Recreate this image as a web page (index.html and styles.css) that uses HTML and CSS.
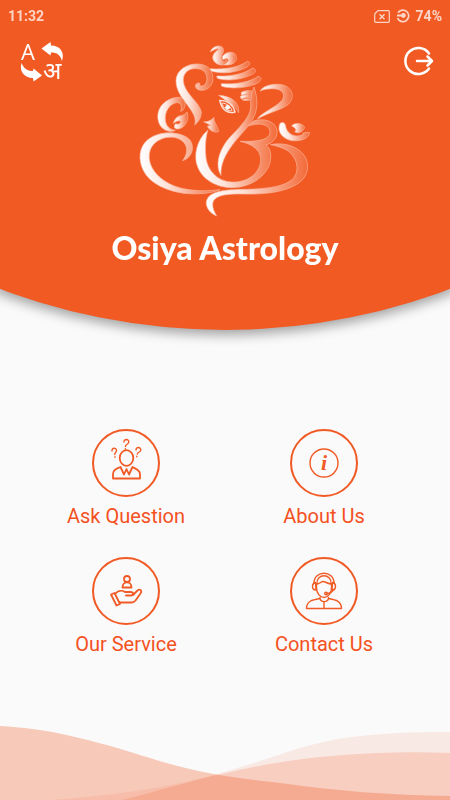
FILE: index.html
```html
<!DOCTYPE html>
<html lang="en">
<head>
    <meta charset="UTF-8">
    <meta name="viewport" content="width=device-width, initial-scale=1.0">
    <title>Osiya Astrology</title>
    <link rel="stylesheet" href="styles.css">
</head>
<body>
    <header class="hero">
        <div class="status-bar">
            <span>11:32</span>
            <div class="status-right">
                <svg width="16" height="13" viewBox="0 0 16 13" fill="none" stroke="currentColor">
                    <path d="M4 .7H14.3Q15.3.7 15.3 1.7V11.3Q15.3 12.3 14.3 12.3H1.7Q.7 12.3.7 11.3V4Z" stroke-width="1.2"/>
                    <path d="M5.5 4.2l5 5M10.5 4.2l-5 5" stroke-width="1.4"/>
                </svg>
                <svg width="14" height="14" viewBox="0 0 14 14" fill="none" stroke="currentColor">
                    <path d="M2 3.800A5.800 5.800 0 1 1 1.500 9" stroke-width="1.7"/>
                    <path d="M1 6.500H7" stroke-width="2"/>
                    <circle cx="7.4" cy="6.5" r="2.400" fill="currentColor" stroke="none"/>
                </svg>
                <span>74%</span>
            </div>
        </div>

        <div class="hero-row">
            <button class="icon-button" aria-label="Change language">
                <svg width="50" height="48" viewBox="-5 0 50 48" fill="#fff">
                    <text x="0" y="20" class="lang-latin">A</text>
                    <text x="22" y="39" class="lang-hindi">अ</text>
                    <path d="M20.5 8.5 29.500 2 30 5.500C39 5.500 44 12 41 21C39.500 15 36 12.500 30 12.500L29.500 15.500Z"/>
                    <path d="M21 35.500 12.500 41.500 12 38C3 38 -2 31 .5 23C3 28.500 6 31 12 31L12.500 28.500Z"/>
                </svg>
            </button>

            <!-- Ganesha logo -->
            <svg class="logo" viewBox="0 0 570 570" role="img" aria-label="Ganesha">
                <defs>
                    <linearGradient id="fade" x1="0" y1="0" x2="1" y2="0">
                        <stop offset="0" stop-color="#fff"/>
                        <stop offset=".35" stop-color="#fde3da"/>
                        <stop offset="1" stop-color="#f36a38"/>
                    </linearGradient>
                </defs>
                <g fill="url(#fade)" stroke="#fab59c" stroke-width="2" stroke-linejoin="round">
                    <path d="M241 47C247 28 276 24 280 39C284 53 266 60 277 73C282 80 288 78 288 70C295 79 293 85 283 87C258 90 240 70 252 53C260 42 268 40 265 38C258 37 251 43 241 47Z"/>
                    <path d="M282 56C292 46 316 45 319 62C322 79 304 90 283 86C292 81 299 73 293 68C288 66 284 69 280 71C275 66 276 60 282 56Z"/>
                    <path d="M240 98C290 102 330 92 352 76C366 80 358 92 340 98C310 112 270 114 243 105Z"/>
                    <path d="M260 120C310 122 345 112 368 96C384 102 376 112 360 118C330 132 290 136 262 127Z"/>
                    <path d="M273 143C320 146 360 138 385 121C400 126 392 138 375 145C340 158 300 158 275 151Z"/>
                    <path d="M194 267C208 225 138 190 138 135C138 100 175 82 205 84C235 86 252 105 248 135C244 160 214 170 200 158C192 149 199 138 210 142C206 149 214 153 222 148C236 138 234 108 212 100C185 92 160 105 160 132C160 170 210 200 214 228C214 248 204 258 194 267Z"/>
                    <path d="M118 286C92 282 80 258 84 232C90 202 118 184 148 184C162 186 168 200 164 212C162 220 156 226 152 226C158 210 152 198 138 200C118 206 104 226 106 252C108 270 118 280 136 283Q126 288 118 286Z"/>
                    <path d="M130 262C134 248 142 240 152 239C162 238 168 232 171 228C179 250 166 276 145 279C132 280 130 270 137 263C147 268 156 258 150 255Q142 252 130 262Z"/>
                    <path d="M158 374C185 366 196 335 180 312C160 290 115 286 85 295C50 305 28 330 30 368C36 430 90 460 160 472C205 476 245 472 270 461C215 468 160 464 120 444C80 424 54 390 58 354C62 318 100 300 130 304C165 310 184 338 158 374Z"/>
                    <path d="M234 282C200 310 190 360 202 390C215 430 260 455 305 455C365 455 420 415 422 365C424 345 415 332 408 327C432 320 445 300 440 280C434 255 400 245 370 255L355 270C385 260 415 262 420 285C422 308 395 318 330 316C370 325 395 345 392 375C388 415 350 440 305 438C260 436 232 400 228 365C224 330 228 300 234 282Z"/>
                    <path d="M372 153C385 190 385 230 360 262C335 300 270 350 273 418C255 390 265 350 290 315C325 275 365 245 362 205C360 180 368 165 372 153Z"/>
                    <path d="M390 165C400 148 430 142 455 146C490 154 495 185 475 205C455 222 410 232 382 249C400 225 440 215 458 190C468 170 450 158 430 158C415 158 400 160 390 165Z"/>
                    <path d="M422 326C460 318 500 330 520 355C542 385 535 425 500 445C460 470 400 476 330 474C280 474 250 480 248 505C248 520 255 530 260 540C235 530 222 505 232 488C245 465 290 460 350 460C420 458 470 450 492 425C510 400 500 365 475 345C460 335 440 330 422 326Z"/>
                    <path d="M450 262C462 255 466 262 468 275C475 300 505 305 520 295C513 291 530 288 539 290C535 310 510 316 485 314C455 308 440 285 450 262Z"/>
                    <path d="M485 270C490 259 518 260 524 274C520 287 506 295 494 287C500 285 499 276 485 270Z"/>
                    <path d="M266 178C304 180 329 199 326 230C316 208 292 198 266 178Z"/>
                    <path d="M221 257C235 259 245 252 252 244C249 255 263 268 266 287C252 291 239 284 232 271L242 268Z"/>
                    <path d="M334 169Q350 161 365 165L364 172Q347 173 334 178ZM331 181Q348 173 364 177V184Q347 184 333 188ZM336 191Q350 186 362 189L359 193Q345 195 336 191Z"/>
                </g>
                <path d="M269 193C293 193 310 207 315 228C294 234 275 223 269 193Z" fill="none" stroke="#fde3da" stroke-width="4"/>
                <path d="M275 201C291 202 303 212 306 224C293 227 281 218 275 201Z" fill="none" stroke="#fde3da" stroke-width="3"/>
                <circle cx="293" cy="214" r="7" fill="#fff"/>
            </svg>

            <button class="icon-button logout" aria-label="Log out">
                <svg width="30" height="30" viewBox="0 0 30 30" fill="none" stroke="#fff" stroke-width="2.500" stroke-linecap="round" stroke-linejoin="round">
                    <path d="M25 7.500A13 13 0 1 0 25 22.500"/>
                    <path d="M13 15H28M23.500 10.500 28 15 23.500 19.500"/>
                </svg>
            </button>
        </div>

        <h1 class="app-title">Osiya Astrology</h1>

        <!-- runs past both sides so the shadow stays even at the edges -->
        <svg class="hero-curve" viewBox="0 0 450 42" aria-hidden="true">
            <path d="M-20 -9A638 638 0 0 0 470 -9Z" fill="#f25a24"/>
        </svg>
    </header>

    <main class="menu">
        <a class="menu-item" href="#ask">
            <span class="menu-icon">
                <svg width="64" height="64" viewBox="0 0 64 64">
                    <ellipse cx="32.500" cy="27" rx="6.800" ry="7.800"/>
                    <path d="M26.500 36C22 38 19 39 19 43V47.500H46V43C46 39 42 38 38.500 36L35 43.500 32.500 38 30 43.500Z"/>
                    <path class="thin" d="M18 20C17.500 16.500 22.500 16.500 22.500 19.500C22.500 21.500 20.500 21.500 20.800 23.500M21 25.800V26.200"/>
                    <path class="thin" d="M30 11C30 7.500 35 8 34.800 11C34.500 13.500 31.500 13 31.500 15.500M31.300 17.800V18.200"/>
                    <path class="thin" d="M42 19C42 15.500 47 16 46.800 19C46.500 21.500 43.500 21 43.300 23M42.800 25.300V25.700"/>
                </svg>
            </span>
            <span class="menu-label">Ask Question</span>
        </a>
        <a class="menu-item" href="#about">
            <span class="menu-icon">
                <svg width="64" height="64" viewBox="0 0 64 64">
                    <circle class="thin" cx="32" cy="32" r="14"/>
                    <text x="32" y="39" class="info-letter">i</text>
                </svg>
            </span>
            <span class="menu-label">About Us</span>
        </a>
        <a class="menu-item" href="#service">
            <span class="menu-icon">
                <svg width="64" height="64" viewBox="0 0 64 64">
                    <circle cx="33" cy="20" r="3"/>
                    <path d="M28.500 28.500C28.500 21.500 37.500 21.500 37.500 28.500Z"/>
                    <path d="M17 35.500 20.500 34 26 45 22.500 46.500Z"/>
                    <path d="M21.500 34.500C24 31.500 28 31 31 33H36.500C40 33 40 36.500 36.500 36.500H32M39 36 43.500 31.500C46 29.500 48.500 31.500 46.500 34.500L41.500 41.500Q40 43.500 37.500 43.500H25.500"/>
                </svg>
            </span>
            <span class="menu-label">Our Service</span>
        </a>
        <a class="menu-item" href="#contact">
            <span class="menu-icon">
                <svg class="fine" width="64" height="64" viewBox="0 0 64 64">
                    <path d="M22 24C22 11 42 11 42 24M25 25C24 14 40 14 39 25"/>
                    <path d="M23.500 23.500Q20.500 24 20.500 27.500T24 31ZM40.500 23.500Q43.500 24 43.500 27.500T40 31Z"/>
                    <path d="M24.500 25C28 25 29 22.500 31 22.500S36 25 39.500 25V29C39.500 34 36 38.500 32 38.500S24.500 34 24.500 29Z"/>
                    <path d="M42 30.500Q39 34.500 35 34.500"/>
                    <circle cx="34" cy="34.500" r="1.300"/>
                    <path d="M28 38.500C28 44 36.500 44 36.500 38.500M28 39.500C20 41 14.500 42 14.500 49.500H49.500C49.500 42 44 41 36.500 39.500M32 43V49.500"/>
                </svg>
            </span>
            <span class="menu-label">Contact Us</span>
        </a>
    </main>

    <footer class="waves" aria-hidden="true">
        <svg viewBox="0 0 450 80" preserveAspectRatio="none" fill="#f15a24">
            <path opacity=".1" d="M50 80C120 75 175 66 217 54C260 42 280 34 300 28C335 18 370 12 450 12V80Z"/>
            <path opacity=".19" d="M122 80C155 72 185 62 222 54C290 37 370 30 450 33V80Z"/>
            <path opacity=".3" d="M0 6C60 9 110 26 150 38C200 54 235 58 280 63C335 71 390 75 450 76V80H0Z"/>
        </svg>
    </footer>
</body>
</html>
```
FILE: styles.css
```css
* {
    box-sizing: border-box;
}
body {
    margin: 0;
    min-height: 100vh;
    display: flex;
    flex-direction: column;
    overflow-x: hidden;
    background: #fafafa;
    font-family: Roboto, sans-serif;
}

/* header */
.hero {
    position: relative;
    height: 286px;
    background: #f25a24;
    filter: drop-shadow(0 5px 6px rgba(0, 0, 0, 0.35));
}
.status-bar {
    display: flex;
    justify-content: space-between;
    align-items: center;
    height: 32px;
    padding: 0 8px;
    color: #fdd5c7;
    font-size: 14px;
    font-weight: 700;
}
.status-right {
    display: flex;
    align-items: center;
    gap: 6px;
}
.hero-row {
    display: flex;
    justify-content: space-between;
    align-items: flex-start;
    padding: 4px 16px 0;
}
.icon-button {
    display: flex;
    width: 50px;
    padding: 4px 0 0;
    border: none;
    background: none;
    cursor: pointer;
}
.icon-button svg {
    overflow: visible;
}
.logout {
    justify-content: flex-end;
    padding-top: 10px;
}
.lang-latin {
    font: 22px "Open Sans", sans-serif;
}
.lang-hindi {
    font: 24px "Noto Sans", "Noto Sans Devanagari", sans-serif;
}
.logo {
    width: 190px;
    height: 190px;
}
.app-title {
    margin: 0;
    color: #fff;
    font-family: Lato, sans-serif;
    font-size: 32px;
    font-weight: 900;
    line-height: 44px;
    text-align: center;
}
.hero-curve {
    position: absolute;
    top: 100%;
    left: 0;
    width: 100%;
    margin-top: 4px;
    overflow: visible;
}

/* menu */
.menu {
    display: grid;
    grid-template-columns: 1fr 1fr;
    row-gap: 28px;
    padding: 143px 27px 40px;
}
.menu-item {
    display: flex;
    flex-direction: column;
    align-items: center;
    gap: 6px;
    color: #f4511e;
    text-decoration: none;
}
.menu-icon {
    display: flex;
    width: 68px;
    height: 68px;
    border: 2px solid #f15a24;
    border-radius: 50%;
}
.menu-icon svg {
    fill: none;
    stroke: #f15a24;
    stroke-width: 1.8;
    stroke-linejoin: round;
    stroke-linecap: round;
}
.menu-icon .fine,
.menu-icon .thin {
    stroke-width: 1.4;
}
.info-letter {
    fill: #f15a24;
    stroke: none;
    font: italic bold 22px "Liberation Serif", serif;
    text-anchor: middle;
}
.menu-label {
    font-size: 20px;
    line-height: 26px;
}

/* bottom waves */
.waves {
    margin-top: auto;
}
.waves svg {
    display: block;
    width: 100%;
    height: 80px;
}
```
